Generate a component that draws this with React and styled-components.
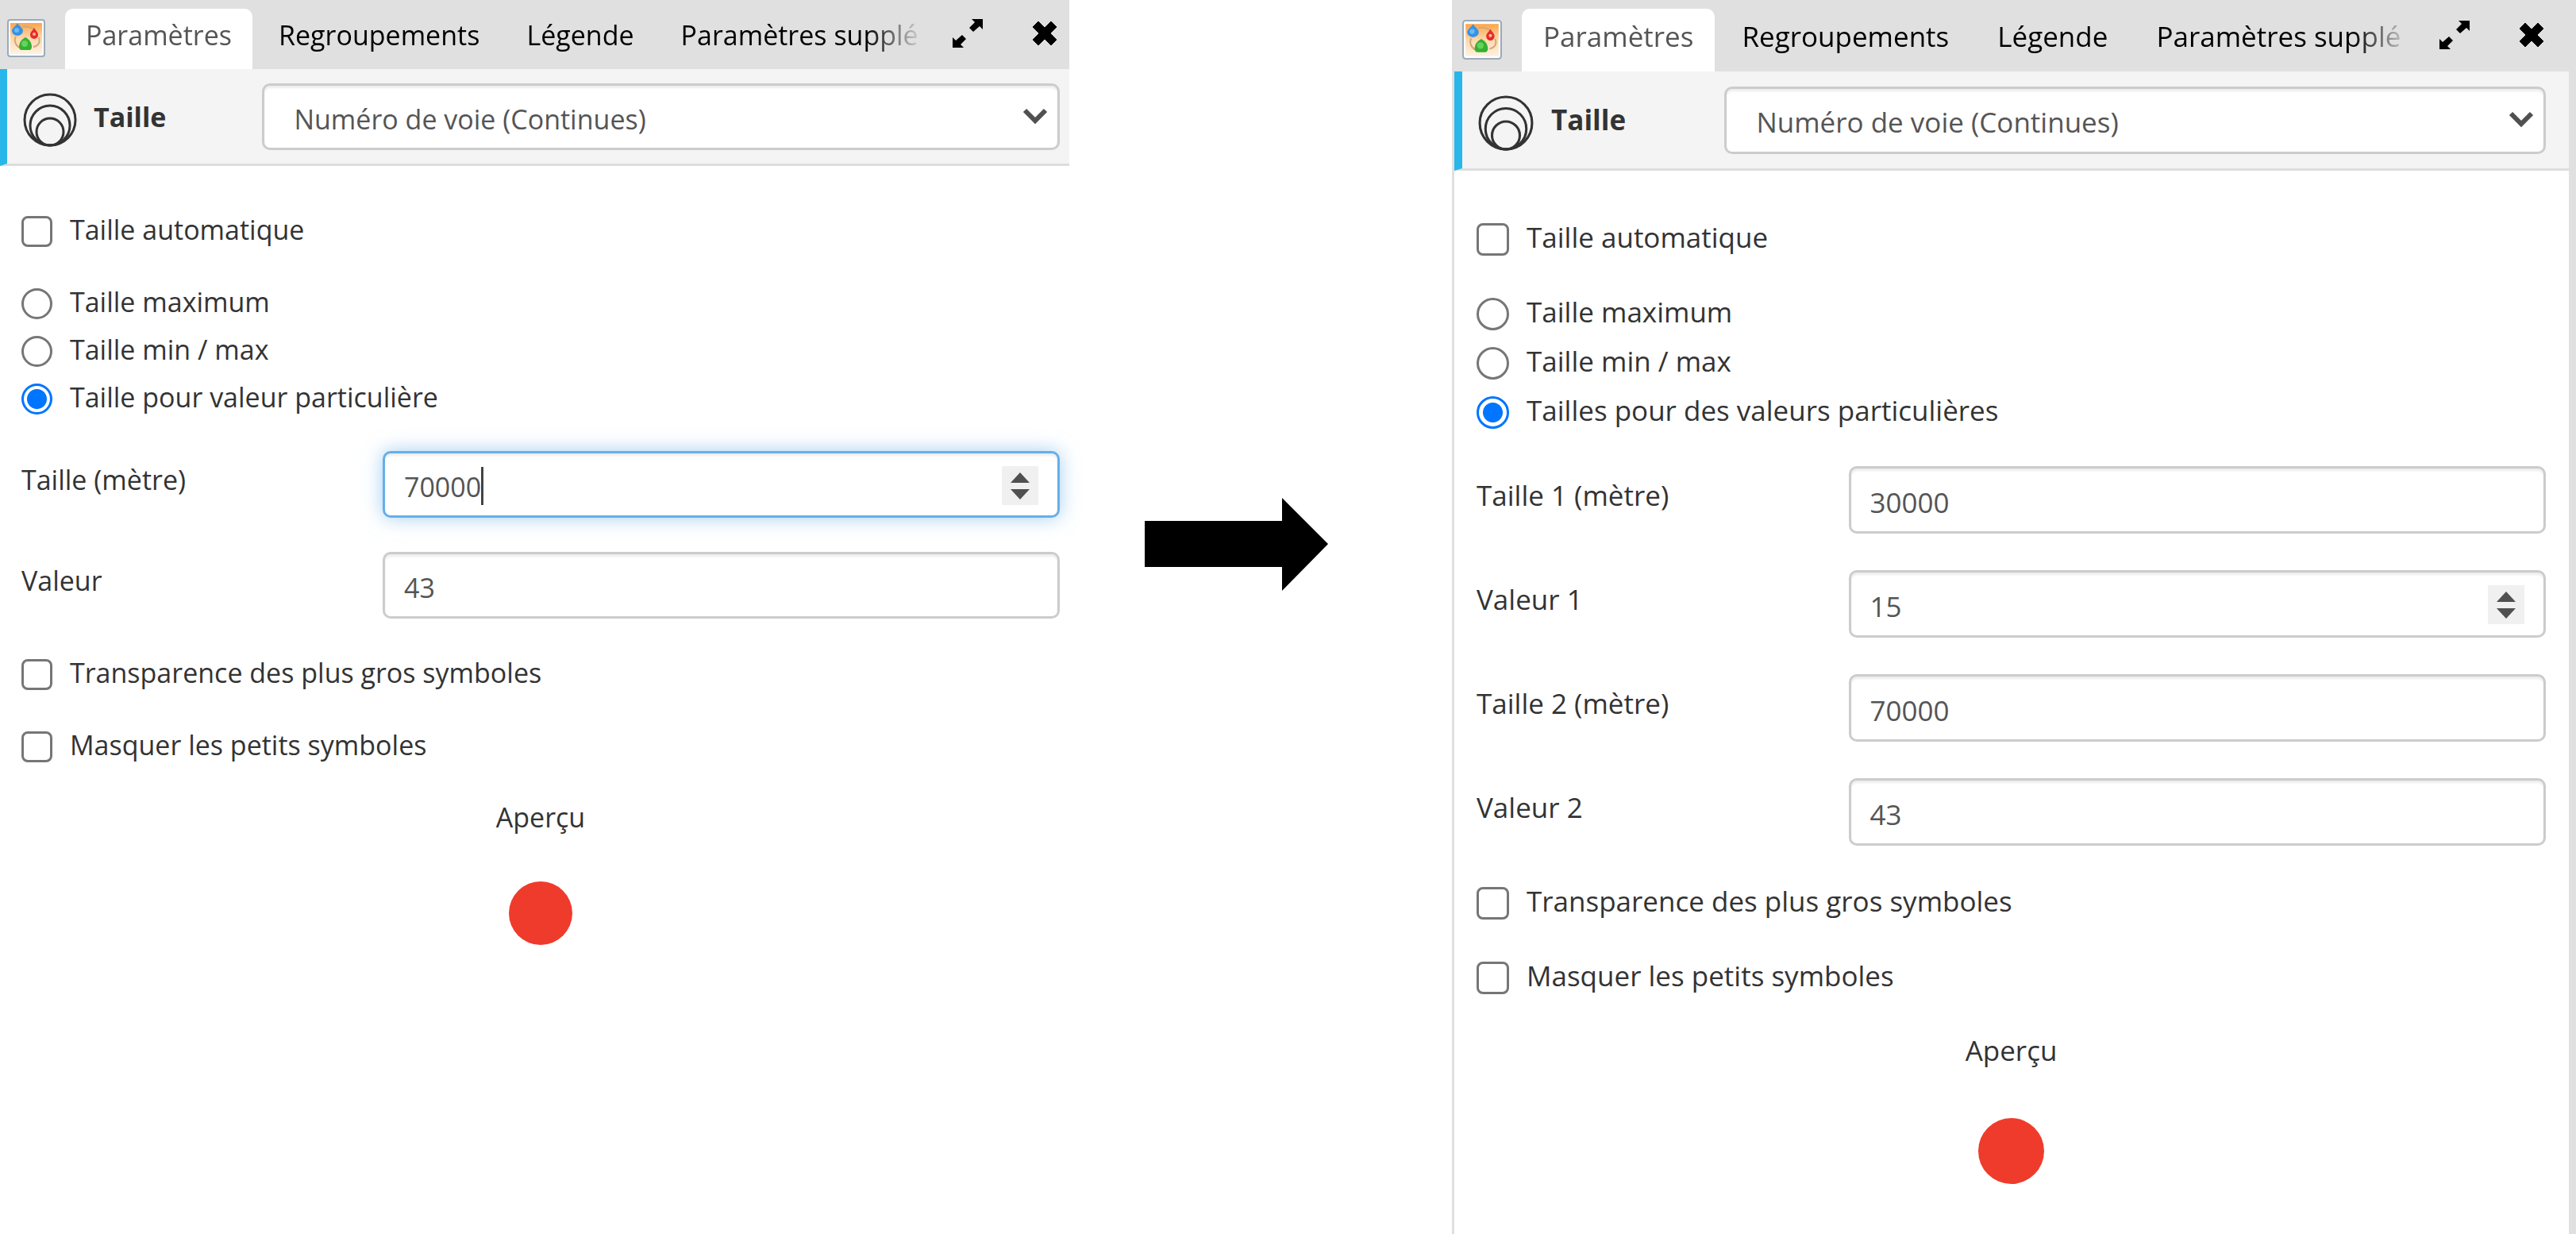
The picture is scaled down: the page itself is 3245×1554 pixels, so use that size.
import React, { useId, useState } from "react";
import styled, { createGlobalStyle, css, ThemeProvider } from "styled-components";

const normal = {
  font: 34,
  control: 84,
  row: 60,
  gap: 31,
  toolbar: 87,
  header: 119,
  tabPad: 26,
  box: 39,
  boxGap: 22,
  appIcon: 48,
  appGap: 25,
  icon: 68,
  iconGap: 21,
  accent: 9,
  left: 27,
  right: 12,
  top: 50,
  fieldTop: 38,
  fieldGap: 43,
  label: 73,
  dot: 80,
  dotTop: 51,
  closeRight: 15,
  edgeLeft: 0,
  edgeRight: 0,
};

const large = {
  font: 35,
  control: 85,
  row: 62,
  gap: 32,
  toolbar: 90,
  header: 122,
  tabPad: 27,
  box: 41,
  boxGap: 22,
  appIcon: 50,
  appGap: 25,
  icon: 70,
  iconGap: 22,
  accent: 10,
  left: 28,
  right: 29,
  top: 53,
  fieldTop: 39,
  fieldGap: 46,
  label: 73,
  dot: 83,
  dotTop: 54,
  closeRight: 31,
  edgeLeft: 3,
  edgeRight: 9,
};

const TABS = ["Paramètres", "Regroupements", "Légende", "Paramètres supplé"];

const AppIcon = () => (
  <AppSvg viewBox="0 0 48 48" aria-hidden="true">
    <defs>
      <linearGradient id="mapBg" x1="0" y1="0" x2="0" y2="1">
        <stop offset="0" stopColor="#fda448" />
        <stop offset="0.5" stopColor="#fdd9ae" />
        <stop offset="1" stopColor="#fff1e2" />
      </linearGradient>
    </defs>
    <rect x="1" y="1" width="46" height="46" rx="3" fill="#fff" stroke="#9aabbc" strokeWidth="2" />
    <rect x="4" y="5" width="40" height="39" fill="url(#mapBg)" />
    <path d="M11 22c-3 5 0 12 5 14M19 10c8-2 12 1 16 3M40 23c2 7-1 11-7 12" fill="none" stroke="#d3a877" strokeWidth="2" />
    <path d="M13 5c2 4 7 6 7 10a7 6 0 0 1-14 0c0-4 5-6 7-10z" fill="#3493e6" />
    <circle cx="12" cy="14" r="3" fill="#6db9f5" />
    <path d="M34 11c2 4 5 5 5 9a5 5 0 0 1-10 0c0-4 3-5 5-9z" fill="#e62b25" />
    <circle cx="34" cy="19" r="2" fill="#ffb3a6" />
    <path d="M23 23c4 2 8 6 8 12 0 2-1 4-3 4H18c-2 0-3-2-3-4 0-6 4-10 8-12z" fill="#35b032" />
    <circle cx="22" cy="31" r="4" fill="#62d35c" />
  </AppSvg>
);

const ExpandIcon = () => (
  <svg width="38" height="38" viewBox="0 0 38 38" aria-hidden="true">
    <path d="M24 1h14v13l-4-4-8 7-5-5 7-7z" />
    <path d="M14 37H0V24l4 4 8-7 5 5-7 7z" />
  </svg>
);

const CloseIcon = () => (
  <svg width="32" height="32" viewBox="0 0 32 32" aria-hidden="true">
    <path d="M8 1l8 8 8-8 7 7-8 8 8 8-7 7-8-8-8 8-7-7 8-8-8-8z" strokeLinejoin="round" stroke="#000" strokeWidth="1" />
  </svg>
);

const SizeIcon = () => (
  <SizeSvg viewBox="0 0 68 68" aria-hidden="true">
    <circle cx="34" cy="34" r="32" />
    <circle cx="34" cy="41" r="25" />
    <circle cx="34" cy="49" r="17" />
  </SizeSvg>
);

const Field = ({ label, value, focused, spinner }) => {
  const id = useId();
  const [text, setText] = useState(value);
  return (
    <FieldRow>
      <FieldLabel htmlFor={id}>{label}</FieldLabel>
      <InputHolder>
        <Input
          id={id}
          type="number"
          value={text}
          $focused={focused}
          onChange={(e) => setText(e.target.value)}
        />
        {focused && <Caret $chars={String(text).length} />}
        {spinner && (
          <Spinner>
            <SpinButton type="button" aria-label="Augmenter" onClick={() => setText(Number(text) + 1)}>
              <svg width="24" height="13" viewBox="0 0 24 13">
                <path d="M0 13L12 0l12 13z" />
              </svg>
            </SpinButton>
            <SpinButton type="button" aria-label="Diminuer" onClick={() => setText(Number(text) - 1)}>
              <svg width="24" height="13" viewBox="0 0 24 13">
                <path d="M0 0l12 13L24 0z" />
              </svg>
            </SpinButton>
          </Spinner>
        )}
      </InputHolder>
    </FieldRow>
  );
};

const Check = ({ children }) => (
  <Choice>
    <Checkbox type="checkbox" />
    {children}
  </Choice>
);

const Panel = ({ theme, modes, fields }) => {
  const id = useId();
  const [mode, setMode] = useState(modes.length - 1);
  return (
    <ThemeProvider theme={theme}>
      <PanelBox>
        <Toolbar>
          <AppIcon />
          <Tabs role="tablist">
            {TABS.map((tab, i) => (
              <Tab key={tab} type="button" role="tab" aria-selected={i === 0} $active={i === 0}>
                {tab}
              </Tab>
            ))}
          </Tabs>
          <Actions>
            <IconButton type="button" aria-label="Agrandir">
              <ExpandIcon />
            </IconButton>
            <IconButton type="button" aria-label="Fermer">
              <CloseIcon />
            </IconButton>
          </Actions>
        </Toolbar>
        <Content>
          <Header>
            <HeaderTitle htmlFor={id}>
              <SizeIcon />
              Taille
            </HeaderTitle>
            <SelectHolder>
              <Select id={id}>
                <option>Numéro de voie (Continues)</option>
              </Select>
              <Chevron width="32" height="20" viewBox="0 0 32 20" aria-hidden="true">
                <path d="M3 3l13 13L29 3" />
              </Chevron>
            </SelectHolder>
          </Header>
          <Body>
            <Check>Taille automatique</Check>
            <RadioGroup role="radiogroup">
              {modes.map((text, i) => (
                <Choice key={text}>
                  <Radio type="radio" name={id} checked={mode === i} onChange={() => setMode(i)} />
                  {text}
                </Choice>
              ))}
            </RadioGroup>
            <Fields>
              {fields.map((props) => (
                <Field key={props.label} {...props} />
              ))}
            </Fields>
            <Checks>
              <Check>Transparence des plus gros symboles</Check>
              <Check>Masquer les petits symboles</Check>
            </Checks>
            <Preview>
              <span>Aperçu</span>
              <Dot />
            </Preview>
          </Body>
        </Content>
      </PanelBox>
    </ThemeProvider>
  );
};

const App = () => {
  return (
    <Page>
      <GlobalStyle />
      <Panel
        theme={normal}
        modes={["Taille maximum", "Taille min / max", "Taille pour valeur particulière"]}
        fields={[
          { label: "Taille (mètre)", value: 70000, focused: true, spinner: true },
          { label: "Valeur", value: 43 },
        ]}
      />
      <Between>
        <Arrow viewBox="0 0 231 117" aria-hidden="true">
          <path d="M0 29h173V0l58 58-58 59V87H0z" />
        </Arrow>
      </Between>
      <Panel
        theme={large}
        modes={["Taille maximum", "Taille min / max", "Tailles pour des valeurs particulières"]}
        fields={[
          { label: "Taille 1 (mètre)", value: 30000 },
          { label: "Valeur 1", value: 15, spinner: true },
          { label: "Taille 2 (mètre)", value: 70000 },
          { label: "Valeur 2", value: 43 },
        ]}
      />
    </Page>
  );
};

export default App;

const GlobalStyle = createGlobalStyle`
  * {
    box-sizing: border-box;
  }
  body {
    margin: 0;
    background: #fff;
    color: #333;
    font-family: "Open Sans", "Noto Sans", sans-serif;
  }
  button, input, select {
    margin: 0;
    font: inherit;
    color: inherit;
  }
`;

const Page = styled.main`
  display: grid;
  grid-template-columns: 1347fr 482fr 1416fr;
  min-height: 100vh;
`;

const Between = styled.div`
  padding: 627px 0 0 95px;
`;

const Arrow = styled.svg`
  display: block;
  width: 231px;
  height: 117px;
`;

const PanelBox = styled.section`
  display: flex;
  flex-direction: column;
  min-width: 0;
  font-size: ${({ theme }) => theme.font}px;
  line-height: ${({ theme }) => theme.row}px;
`;

const Toolbar = styled.div`
  display: flex;
  align-items: flex-end;
  height: ${({ theme }) => theme.toolbar}px;
  padding-left: ${({ theme }) => (theme.edgeLeft ? 13 : 9)}px;
  background: #e0e0e0;
`;

const AppSvg = styled.svg`
  flex: none;
  width: ${({ theme }) => theme.appIcon}px;
  height: ${({ theme }) => theme.appIcon}px;
  margin: 0 ${({ theme }) => theme.appGap}px 15px 0;
`;

const Tabs = styled.div`
  display: flex;
  flex: 1;
  gap: 7px;
  min-width: 0;
  overflow: hidden;
  white-space: nowrap;
  mask-image: linear-gradient(to left, transparent 8px, #000 80px);
`;

const Tab = styled.button`
  flex: none;
  height: ${({ theme }) => theme.toolbar - 11}px;
  padding: 0 ${({ theme }) => theme.tabPad}px 10px;
  border: 0;
  border-radius: 10px 10px 0 0;
  background: ${({ $active }) => ($active ? "#fff" : "transparent")};
  color: ${({ $active }) => ($active ? "#555" : "#000")};
  line-height: 60px;
  cursor: pointer;
`;

const Actions = styled.div`
  display: flex;
  align-items: center;
  align-self: stretch;
  gap: 62px;
  padding: 0 ${({ theme }) => theme.closeRight + theme.edgeRight}px 3px 29px;
`;

const IconButton = styled.button`
  display: flex;
  padding: 0;
  border: 0;
  background: none;
  cursor: pointer;
`;

const Content = styled.div`
  flex: 1;
  border-style: solid;
  border-color: #e0e0e0;
  border-width: 0 ${({ theme }) => theme.edgeRight}px 0 ${({ theme }) => theme.edgeLeft}px;
`;

const Header = styled.div`
  display: grid;
  grid-template-columns: 3fr 10fr;
  align-items: center;
  height: ${({ theme }) => theme.header + 3}px;
  padding: 0 ${({ theme }) => theme.right}px 0 20px;
  border-left: ${({ theme }) => theme.accent}px solid #29b6e8;
  border-bottom: 3px solid #ddd;
  background: #f4f4f4;
`;

const HeaderTitle = styled.label`
  display: flex;
  align-items: center;
  gap: ${({ theme }) => theme.iconGap}px;
  font-weight: 700;
`;

const SizeSvg = styled.svg`
  flex: none;
  width: ${({ theme }) => theme.icon}px;
  height: ${({ theme }) => theme.icon}px;
  margin-top: 8px;
  fill: none;
  stroke: #333;
  stroke-width: 3;
`;

const SelectHolder = styled.div`
  position: relative;
`;

const controlStyle = css`
  display: block;
  width: 100%;
  height: ${({ theme }) => theme.control}px;
  border: 3px solid #ccc;
  border-radius: 10px;
  background: #fff;
  box-shadow: inset 0 3px 3px rgba(0, 0, 0, 0.075);
  color: #555;
  outline: none;
`;

const Select = styled.select`
  ${controlStyle}
  padding: 6px 70px 0 37px;
  appearance: none;
`;

const Chevron = styled.svg`
  position: absolute;
  top: 31px;
  right: 15px;
  fill: none;
  stroke: #505050;
  stroke-width: 6;
  pointer-events: none;
`;

const Body = styled.form`
  padding: ${({ theme }) => `${theme.top}px ${theme.right}px 40px ${theme.left}px`};
`;

const Choice = styled.label`
  display: flex;
  align-items: center;
  gap: ${({ theme }) => theme.boxGap}px;
  height: ${({ theme }) => theme.row}px;
`;

const boxStyle = css`
  flex: none;
  width: ${({ theme }) => theme.box}px;
  height: ${({ theme }) => theme.box}px;
  margin-top: 5px;
  border: 3px solid #767676;
  background: #fff;
  appearance: none;
`;

const Checkbox = styled.input`
  ${boxStyle}
  border-radius: 8px;
  &:checked {
    border-color: #0075ff;
    background: #0075ff;
  }
`;

const Radio = styled.input`
  ${boxStyle}
  border-radius: 50%;
  &:checked {
    border-color: #0075ff;
    background: radial-gradient(circle, #0075ff 12px, #fff 13px);
  }
`;

const RadioGroup = styled.div`
  margin-top: ${({ theme }) => theme.gap}px;
`;

const Fields = styled.div`
  display: flex;
  flex-direction: column;
  gap: ${({ theme }) => theme.fieldGap}px;
  margin: ${({ theme }) => theme.fieldTop}px 0;
`;

const FieldRow = styled.div`
  display: grid;
  grid-template-columns: 8fr 15fr;
`;

const FieldLabel = styled.label`
  line-height: ${({ theme }) => theme.label}px;
`;

const InputHolder = styled.div`
  position: relative;
`;

const Input = styled.input`
  ${controlStyle}
  padding: 6px 90px 0 24px;
  appearance: textfield;
  &::-webkit-inner-spin-button {
    display: none;
  }
  ${({ $focused }) =>
    $focused &&
    css`
      border-color: #66afe9;
      box-shadow: inset 0 3px 3px rgba(0, 0, 0, 0.075), 0 0 24px rgba(102, 175, 233, 0.6);
      caret-color: transparent;
    `}
`;

const Caret = styled.span`
  position: absolute;
  top: 20px;
  left: calc(27px + ${({ $chars }) => $chars}ch);
  width: 3px;
  height: 48px;
  background: #444;
`;

const Spinner = styled.div`
  position: absolute;
  top: 19px;
  right: 27px;
  display: flex;
  flex-direction: column;
  justify-content: center;
  gap: 8px;
  width: 46px;
  height: 49px;
  background: #f0f0f0;
`;

const SpinButton = styled.button`
  display: flex;
  justify-content: center;
  padding: 0;
  border: 0;
  background: none;
  fill: #505050;
`;

const Checks = styled.div`
  display: flex;
  flex-direction: column;
  gap: ${({ theme }) => theme.gap}px;
`;

const Preview = styled.div`
  display: flex;
  flex-direction: column;
  align-items: center;
  margin-top: ${({ theme }) => theme.gap}px;
`;

const Dot = styled.div`
  width: ${({ theme }) => theme.dot}px;
  height: ${({ theme }) => theme.dot}px;
  margin-top: ${({ theme }) => theme.dotTop}px;
  border-radius: 50%;
  background: #ef3b2c;
`;
